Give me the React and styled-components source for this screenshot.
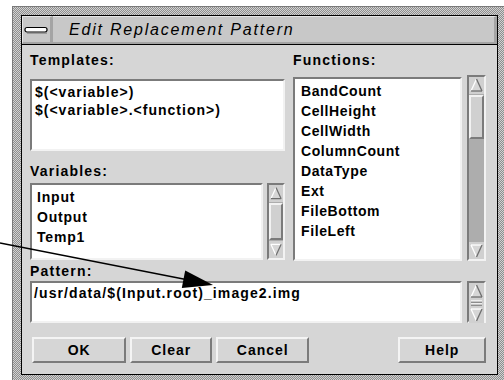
import React from 'react';
import styled, { createGlobalStyle } from 'styled-components';

const Global = createGlobalStyle`
  html, body { margin: 0; padding: 0; background: #ffffff; overflow: hidden; }
  body { width: 504px; height: 380px; font-family: "Liberation Sans", Arial, sans-serif; color: #000; }
`;

const stipple = `repeating-conic-gradient(#8e8e8e 0 25%, #d2d2d2 0 50%) 0 0 / 2px 2px`;

const Page = styled.div`
  position: relative;
  width: 504px;
  height: 380px;
  overflow: hidden;
  box-sizing: border-box;
  padding: 6px 0 0 12px;
`;

const Frame = styled.div`
  width: 495px;
  height: 390px;
  box-sizing: border-box;
  border-top: 1px solid #7a7a7a;
  border-left: 1px solid #7a7a7a;
  padding: 8px;
  background: ${stipple};
`;

const Inner = styled.div`
  width: 477px;
  height: 360px;
  box-sizing: border-box;
  border: 1px solid #000;
  background: #d6d6d6;
  display: flex;
  flex-direction: column;
`;

const TitleBar = styled.div`
  display: flex;
  height: 29px;
  box-sizing: border-box;
  border-bottom: 1px solid #000;
  background: #c8c8c8;
`;

const MenuBox = styled.div`
  width: 31px;
  box-sizing: border-box;
  border-top: 1px solid #e6e6e6;
  border-left: 1px solid #e6e6e6;
  border-right: 3px solid #a4a4a4;
  border-bottom: 2px solid #a4a4a4;
  display: flex;
  align-items: center;
  justify-content: center;
`;

const TitleText = styled.div`
  flex: 1;
  box-sizing: border-box;
  border-top: 1px solid #e6e6e6;
  border-right: 3px solid #a4a4a4;
  border-bottom: 2px solid #a4a4a4;
  padding-left: 16px;
  display: flex;
  align-items: center;
  font-style: italic;
  font-size: 16px;
  letter-spacing: 1.8px;
  line-height: 26px;
`;

const Content = styled.div`
  flex: 1;
  display: flex;
  flex-direction: column;
  padding: 7px 11px 0 8px;
`;

const TopGrid = styled.div`
  display: grid;
  grid-template-columns: 255px 193px;
  column-gap: 8px;
  align-items: start;
`;

const Column = styled.div`
  display: flex;
  flex-direction: column;
`;

const Label = styled.div`
  font-weight: bold;
  font-size: 14px;
  letter-spacing: 1.2px;
  line-height: 16px;
  margin-top: ${p => p.$top || 0}px;
  margin-bottom: ${p => p.$gap}px;
`;

const Row = styled.div`
  display: flex;
  gap: ${p => p.$gap}px;
  height: ${p => p.$h}px;
`;

const ListBox = styled.div`
  box-sizing: border-box;
  width: ${p => p.$w}px;
  height: ${p => p.$h}px;
  border: 2px solid;
  border-color: #7b7b7b #f2f2f2 #f2f2f2 #7b7b7b;
  background: #ffffff;
  padding: 2px 0 0 ${p => p.$pad}px;
  overflow: hidden;
`;

const Item = styled.div`
  font-weight: bold;
  font-size: 14px;
  letter-spacing: ${p => p.$ls}px;
  line-height: ${p => p.$lh}px;
  white-space: nowrap;
`;

const Track = styled.div`
  box-sizing: border-box;
  width: ${p => p.$w}px;
  height: ${p => p.$h}px;
  margin-top: ${p => p.$top || 0}px;
  border: 2px solid;
  border-color: #7b7b7b #f2f2f2 #f2f2f2 #7b7b7b;
  background: #adadad;
  display: flex;
  flex-direction: column;
`;

const ArrowCell = styled.div`
  height: 17px;
  flex: none;
  background: #d0d0d0;
  display: flex;
  align-items: center;
  justify-content: center;
`;

const Thumb = styled.div`
  box-sizing: border-box;
  flex: ${p => (p.$fill ? '1' : 'none')};
  height: ${p => (p.$fill ? 'auto' : `${p.$h}px`)};
  margin: 1px 0;
  background: #d0d0d0;
  border: 2px solid;
  border-color: #f2f2f2 #7b7b7b #7b7b7b #f2f2f2;
`;

const Spacer = styled.div`
  flex: 1;
`;

const SpinMid = styled.div`
  flex: 1;
  background: #d0d0d0;
  display: flex;
  align-items: center;
  justify-content: center;
`;

const PatternBox = styled(ListBox)`
  padding-top: 2px;
`;

const ButtonRow = styled.div`
  display: flex;
  margin-top: 14px;
  padding-left: 2px;
  gap: 4px;
`;

const Button = styled.div`
  box-sizing: border-box;
  width: ${p => p.$w}px;
  height: 26px;
  margin-left: ${p => p.$ml || 0}px;
  border: 2px solid;
  border-color: #f4f4f4 #7b7b7b #7b7b7b #f4f4f4;
  background: #d6d6d6;
  display: flex;
  align-items: center;
  justify-content: center;
  font-weight: bold;
  font-size: 14px;
  letter-spacing: 1px;
`;

const Overlay = styled.svg`
  position: absolute;
  left: 0;
  top: 0;
  pointer-events: none;
`;

const UpArrow = () => (
  <svg width="15" height="17" viewBox="0 0 15 17">
    <polygon points="7.5,2 13,14 2,14" fill="#d6d6d6" />
    <line x1="7.5" y1="2" x2="2" y2="14" stroke="#ffffff" strokeWidth="1.3" />
    <line x1="7.5" y1="2" x2="13" y2="14" stroke="#6e6e6e" strokeWidth="1.3" />
    <line x1="2" y1="14" x2="13" y2="14" stroke="#6e6e6e" strokeWidth="1.3" />
  </svg>
);

const DownArrow = () => (
  <svg width="15" height="17" viewBox="0 0 15 17">
    <polygon points="2,3 13,3 7.5,15" fill="#d6d6d6" />
    <line x1="2" y1="3" x2="13" y2="3" stroke="#ffffff" strokeWidth="1.3" />
    <line x1="2" y1="3" x2="7.5" y2="15" stroke="#ffffff" strokeWidth="1.3" />
    <line x1="13" y1="3" x2="7.5" y2="15" stroke="#6e6e6e" strokeWidth="1.3" />
  </svg>
);

const ScrollBar = ({ w, h, top, thumb }) => (
  <Track $w={w} $h={h} $top={top}>
    <ArrowCell><UpArrow /></ArrowCell>
    {thumb ? <Thumb $h={thumb} /> : <Thumb $fill />}
    {thumb ? <Spacer /> : null}
    <ArrowCell><DownArrow /></ArrowCell>
  </Track>
);

const Spin = () => (
  <Track $w={19} $h={42}>
    <SpinMid><UpArrow /></SpinMid>
    <SpinMid>
      <svg width="15" height="6" viewBox="0 0 15 6">
        <line x1="2" y1="1" x2="13" y2="1" stroke="#ffffff" strokeWidth="1.3" />
        <line x1="2" y1="2.2" x2="13" y2="2.2" stroke="#6e6e6e" strokeWidth="1" />
        <line x1="2" y1="4" x2="13" y2="4" stroke="#ffffff" strokeWidth="1.3" />
        <line x1="2" y1="5.2" x2="13" y2="5.2" stroke="#6e6e6e" strokeWidth="1" />
      </svg>
    </SpinMid>
    <SpinMid><DownArrow /></SpinMid>
  </Track>
);

const templates = ['$(<variable>)', '$(<variable>.<function>)'];
const variables = ['Input', 'Output', 'Temp1'];
const functions = ['BandCount', 'CellHeight', 'CellWidth', 'ColumnCount', 'DataType', 'Ext', 'FileBottom', 'FileLeft'];

export default function App() {
  return (
    <>
      <Global />
      <Page>
        <Frame>
          <Inner>
            <TitleBar>
              <MenuBox>
                <svg width="25" height="8" viewBox="0 0 25 8">
                  <rect x="1" y="1.5" width="22" height="4.5" rx="2" fill="#ffffff" stroke="#000" strokeWidth="1.2" />
                  <line x1="3" y1="7" x2="23" y2="7" stroke="#6e6e6e" strokeWidth="1" />
                </svg>
              </MenuBox>
              <TitleText>Edit Replacement Pattern</TitleText>
            </TitleBar>
            <Content>
              <TopGrid>
                <Column>
                  <Label $gap={11}>Templates:</Label>
                  <ListBox $w={255} $h={72} $pad={3}>
                    {templates.map(t => (
                      <Item key={t} $lh={18} $ls={1}>{t}</Item>
                    ))}
                  </ListBox>
                  <Label $top={12} $gap={4}>Variables:</Label>
                  <Row $gap={4} $h={77}>
                    <ListBox $w={233} $h={77} $pad={5}>
                      {variables.map(t => (
                        <Item key={t} $lh={20} $ls={0.8}>{t}</Item>
                      ))}
                    </ListBox>
                    <ScrollBar w={18} h={77} />
                  </Row>
                </Column>
                <Column>
                  <Label $gap={9}>Functions:</Label>
                  <Row $gap={5} $h={184}>
                    <ListBox $w={169} $h={184} $pad={6}>
                      {functions.map(t => (
                        <Item key={t} $lh={20} $ls={0.6}>{t}</Item>
                      ))}
                    </ListBox>
                    <ScrollBar w={19} h={186} top={-2} thumb={44} />
                  </Row>
                </Column>
              </TopGrid>
              <Label $top={2} $gap={2}>Pattern:</Label>
              <Row $gap={5} $h={42}>
                <PatternBox $w={432} $h={42} $pad={2}>
                  <Item $lh={16} $ls={1.1}>/usr/data/$(Input.root)_image2.img</Item>
                </PatternBox>
                <Spin />
              </Row>
              <ButtonRow>
                <Button $w={95}>OK</Button>
                <Button $w={82}>Clear</Button>
                <Button $w={94}>Cancel</Button>
                <Button $w={88} $ml={85}>Help</Button>
              </ButtonRow>
            </Content>
          </Inner>
        </Frame>
        <Overlay width="504" height="380" viewBox="0 0 504 380">
          <line x1="0" y1="243" x2="186" y2="279.5" stroke="#000" strokeWidth="1.3" />
          <polygon points="213,285 185.2,270.5 181.8,288.1" fill="#000" />
        </Overlay>
      </Page>
    </>
  );
}
